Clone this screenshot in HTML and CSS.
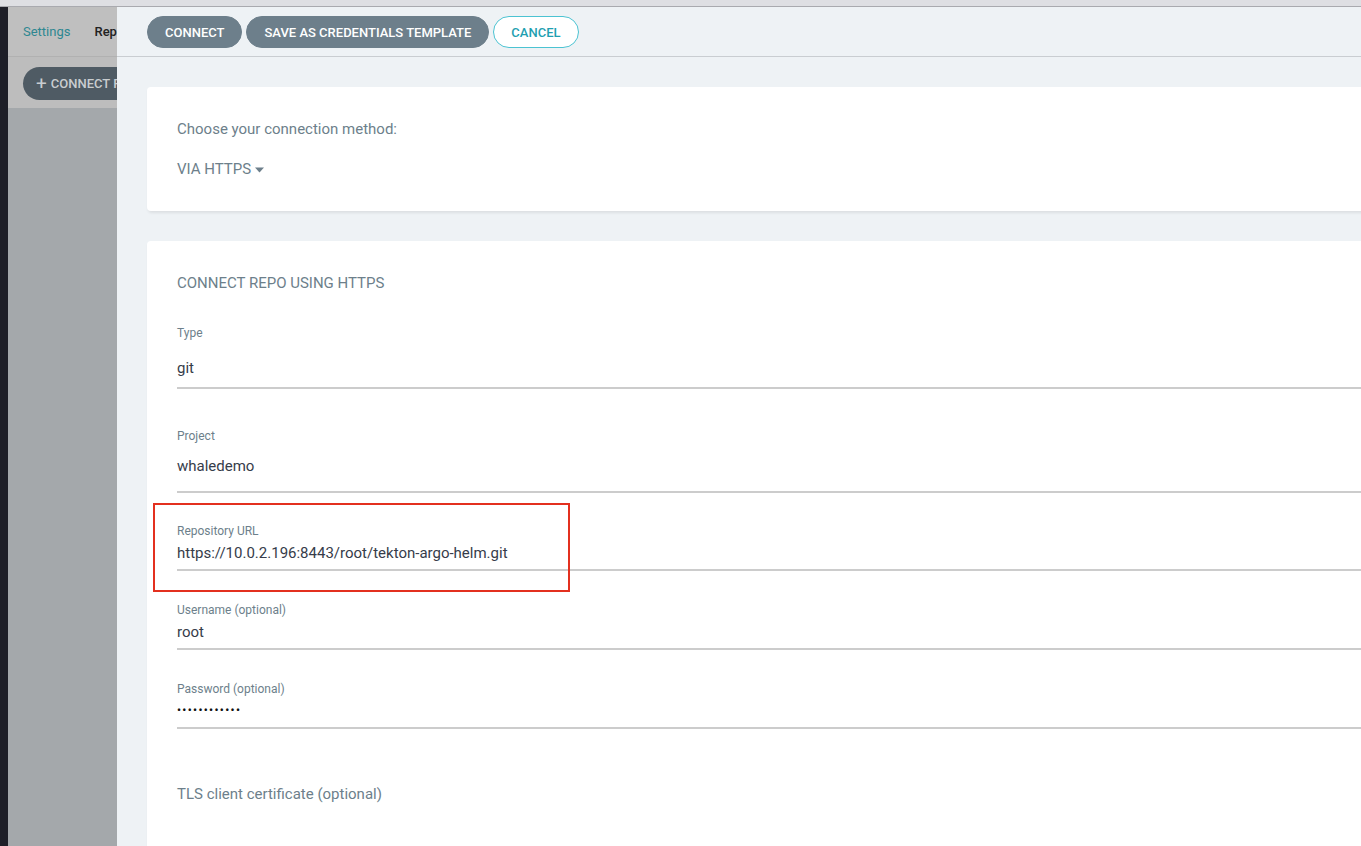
FILE: index.html
```html
<!DOCTYPE html>
<html>
<head>
<meta charset="utf-8">
<link rel="stylesheet" href="styles.css">
</head>
<body>
<div class="topstrip"></div>
<div class="app">
  <div class="sidebar"></div>
  <div class="page">
    <div class="page-header">
      <span class="crumb-link">Settings</span>
      <span class="crumb-sep"></span>
      <span class="crumb-current">Repositories</span>
    </div>
    <div class="page-toolbar">
      <span class="page-btn"><span class="plus">+</span> CONNECT REPO USING HTTPS</span>
    </div>
    <div class="page-body"></div>
  </div>
  <div class="panel">
    <div class="panel-toolbar">
      <button class="btn">CONNECT</button>
      <button class="btn">SAVE AS CREDENTIALS TEMPLATE</button>
      <button class="btn btn-outline">CANCEL</button>
    </div>
    <div class="panel-content">
      <div class="card card-method">
        <p class="muted">Choose your connection method:</p>
        <p class="muted dropdown"><span>VIA HTTPS</span><svg class="caret" width="9" height="6" viewBox="0 0 9 6"><path d="M0 0.5h9L4.5 5.5z" fill="#6d7f8b"/></svg></p>
      </div>
      <div class="card card-form">
        <div class="annotation"></div>
        <p class="muted title">CONNECT REPO USING HTTPS</p>
        <div class="field field-type">
          <label class="label">Type</label>
          <div class="input input-type">git</div>
        </div>
        <div class="field field-project">
          <label class="label">Project</label>
          <div class="input input-project">whaledemo</div>
        </div>
        <div class="field field-url">
          <label class="label">Repository URL</label>
          <div class="input">https://10.0.2.196:8443/root/tekton-argo-helm.git</div>
        </div>
        <div class="field field-user">
          <label class="label">Username (optional)</label>
          <div class="input">root</div>
        </div>
        <div class="field field-pass">
          <label class="label">Password (optional)</label>
          <div class="input dots">••••••••••••</div>
        </div>
        <p class="muted tls">TLS client certificate (optional)</p>
      </div>
    </div>
  </div>
</div>
</body>
</html>
```

FILE: styles.css
```css
* { box-sizing: border-box; }
html, body {
  margin: 0;
  padding: 0;
  height: 846px;
  overflow: hidden;
  font-family: Roboto, "Liberation Sans", Arial, sans-serif;
}
.topstrip {
  height: 7px;
  background: #dedfe3;
  border-bottom: 1px solid #a9aaaf;
}
.app {
  display: flex;
  height: 839px;
}
.sidebar {
  width: 8px;
  flex: none;
  background: #1e1f28;
}
.page {
  width: 109px;
  flex: none;
  overflow: hidden;
  display: flex;
  flex-direction: column;
  background: #a4a8ab;
}
.page-header {
  height: 50px;
  flex: none;
  background: #bfbfbf;
  border-bottom: 1px solid #b1b1b1;
  display: flex;
  align-items: center;
  padding-left: 15px;
  white-space: nowrap;
  font-size: 13px;
}
.crumb-link { color: #2e8791; }
.crumb-sep {
  display: inline-block;
  width: 1px;
  height: 24px;
  background: #9c9c9c;
  transform: rotate(20deg);
  margin: 0 13px 0 11px;
}
.crumb-current { color: #222; font-weight: 500; }
.page-toolbar {
  height: 51px;
  flex: none;
  background: #bdbdbd;
  padding: 10px 0 0 15px;
  white-space: nowrap;
}
.page-btn {
  display: inline-flex;
  align-items: center;
  height: 33px;
  padding: 0 14px 0 13px;
  border-radius: 17px;
  background: #4f5b64;
  color: #c9cdd0;
  font-size: 13px;
  font-weight: 500;
}
.plus { font-size: 19px; font-weight: 400; margin-right: 4px; line-height: 1; }
.page-body { flex: 1; }

.panel {
  flex: 1;
  min-width: 0;
  overflow: hidden;
  background: #eef2f5;
}
.panel-toolbar {
  height: 50px;
  border-bottom: 1px solid #c9cdd1;
  display: flex;
  align-items: center;
  gap: 4px;
  padding: 1px 0 0 30px;
}
.btn {
  height: 32px;
  padding: 0 17px;
  border-radius: 16px;
  border: 1px solid #6d7f8b;
  background: #6d7f8b;
  color: #fff;
  font-family: Roboto, "Liberation Sans", Arial, sans-serif;
  font-size: 13px;
  font-weight: 500;
  letter-spacing: 0;
}
.btn-outline {
  background: #fff;
  border-color: #4cc3d2;
  color: #1f9fb1;
}
.panel-content {
  padding: 30px 0 0 30px;
  display: flex;
  flex-direction: column;
  gap: 30px;
}
.card {
  background: #fff;
  width: calc(100% + 30px);
  border-radius: 4px;
  box-shadow: 1px 2px 3px rgba(0, 0, 0, 0.08);
  padding: 0 30px;
}
.muted {
  margin: 0;
  color: #6d7f8b;
  font-size: 15px;
  line-height: 20px;
}
.card-method {
  padding-top: 32px;
  padding-bottom: 32px;
  display: flex;
  flex-direction: column;
  gap: 20px;
}
.dropdown { display: flex; align-items: center; gap: 4px; }
.caret { margin-top: 1px; }
.card-form {
  position: relative;
  padding-top: 32px;
  height: 620px;
}
.title { margin-bottom: 33px; }
.field { display: flex; flex-direction: column; }
.label {
  font-size: 12px;
  line-height: 14px;
  color: #6d7f8b;
}
.input {
  height: 33px;
  line-height: 30px;
  font-size: 15px;
  color: #363c4a;
  border-bottom: 2px solid #cccccc;
}
.input-type {
  height: 49px;
  padding-top: 13px;
}
.input-project {
  height: 50px;
  padding-top: 8px;
}
.field-project { margin-top: 40px; }
.field-url { margin-top: 31px; }
.field-user { margin-top: 32px; }
.field-pass { margin-top: 32px; }
.dots {
  color: #111;
  font-size: 11px;
  font-weight: 700;
  letter-spacing: 1.4px;
}
.tls { margin-top: 55px; }
.annotation {
  position: absolute;
  left: 6px;
  top: 262px;
  width: 417px;
  height: 89px;
  border: 2px solid #e3301f;
  pointer-events: none;
}
```
